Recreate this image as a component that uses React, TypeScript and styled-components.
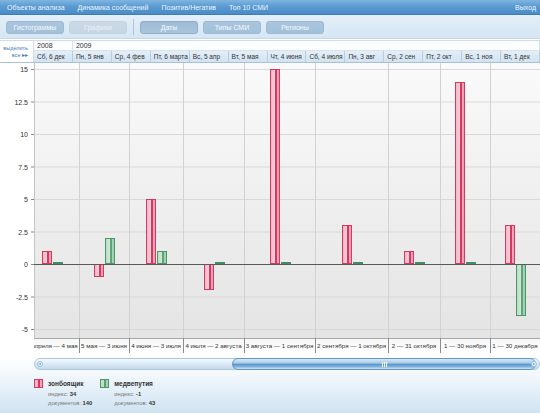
import React from 'react';
import styled, { createGlobalStyle } from 'styled-components';

const GlobalStyle = createGlobalStyle`
  html, body {
    margin: 0;
    padding: 0;
    background: #fff;
  }
  body {
    font-family: "Liberation Sans", Arial, sans-serif;
  }
`;

const Page = styled.div`
  width: 540px;
  height: 413px;
  display: flex;
  flex-direction: column;
  overflow: hidden;
  background: #fff;
`;

const NavBar = styled.div`
  height: 15px;
  display: flex;
  align-items: center;
  gap: 13px;
  padding: 0 4px 0 7px;
  background: linear-gradient(#80b5e0, #5a9bd2 45%, #4a8cc7);
  border-bottom: 1px solid #3f7db6;
  box-sizing: border-box;
`;

const NavLink = styled.span<{ $right?: boolean }>`
  color: #eef5fc;
  font-size: 7px;
  white-space: nowrap;
  margin-left: ${({ $right }) => ($right ? 'auto' : '0')};
`;

const Toolbar = styled.div`
  height: 24px;
  display: flex;
  align-items: center;
  gap: 5px;
  padding: 1px 6px 0;
  background: linear-gradient(#e4eff8, #d6e6f3);
  border-bottom: 1px solid #c4d7e8;
  box-sizing: border-box;
`;

const ToolButton = styled.div<{ $state: 'normal' | 'disabled' | 'active' }>`
  width: 58px;
  height: 13px;
  border-radius: 3px;
  display: flex;
  align-items: center;
  justify-content: center;
  font-size: 7px;
  box-sizing: border-box;
  color: ${({ $state }) => ($state === 'disabled' ? '#e9f1f8' : '#f6fafd')};
  border: 1px solid
    ${({ $state }) =>
      $state === 'active' ? '#8eaecb' : $state === 'disabled' ? '#c3d3e1' : '#9db9d3'};
  background: ${({ $state }) =>
    $state === 'active'
      ? 'linear-gradient(#9fbcd6, #a9c4dc)'
      : $state === 'disabled'
      ? 'linear-gradient(#cbd9e6, #c6d6e4)'
      : 'linear-gradient(#aac5dd, #a3c0da)'};
`;

const Separator = styled.div`
  width: 1px;
  height: 16px;
  background: #aec5da;
  margin: 0 1px;
`;

const DateHeader = styled.div`
  margin-top: 1px;
  display: grid;
  grid-template-columns: 34px repeat(13, 1fr);
  grid-template-rows: 10px 11px;
  border-top: 1px solid #cfdde9;
  border-bottom: 1px solid #a9c1d6;
`;

const SelectAll = styled.div`
  grid-row: 1 / span 2;
  display: flex;
  flex-direction: column;
  align-items: flex-end;
  justify-content: center;
  padding-right: 5px;
  font-size: 5.5px;
  line-height: 7px;
  color: #3f78bd;
  background: #fff;
  border-right: 1px solid #cfdde9;
`;

const YearCell = styled.div<{ $span: number }>`
  grid-column: span ${({ $span }) => $span};
  font-size: 7px;
  color: #333;
  padding-left: 3px;
  display: flex;
  align-items: center;
  background: #fbfdfe;
  border-right: 1px solid #d7e3ee;
  border-bottom: 1px solid #d7e3ee;
`;

const DayCell = styled.div`
  font-size: 6.5px;
  color: #333;
  padding-left: 3px;
  display: flex;
  align-items: center;
  white-space: nowrap;
  overflow: hidden;
  background: linear-gradient(#e3eef8, #d3e3f1);
  border-right: 1px solid #b8cde0;
`;

const ChartBox = styled.div`
  height: 290px;
  background: #fff;
`;

const Footer = styled.div`
  flex: 1;
  display: flex;
  flex-direction: column;
  background: linear-gradient(#fff 10%, #f3f8fc 35%, #d0e3f2);
`;

const ScrollRow = styled.div`
  height: 20px;
  padding: 5px 0 0 34px;
  box-sizing: border-box;
`;

const Track = styled.div`
  position: relative;
  height: 12px;
  border-radius: 6px;
  border: 1px solid #a9c8e2;
  box-sizing: border-box;
  background: linear-gradient(#f4f9fd, #d9e8f4 55%, #c3d9ec);
`;

const Arrow = styled.span<{ $side: 'left' | 'right' }>`
  position: absolute;
  top: 2px;
  ${({ $side }) => ($side === 'left' ? 'left: 2px;' : 'right: 2px;')}
  width: 6px;
  height: 6px;
  border-radius: 3px;
  background: #eef5fb;
  border: 1px solid #98bddc;
  box-sizing: border-box;
  &::after {
    content: '';
    position: absolute;
    top: 1px;
    ${({ $side }) =>
      $side === 'left'
        ? 'left: 0px; border-right: 3px solid #7aa6cc;'
        : 'right: 0px; border-left: 3px solid #7aa6cc;'}
    border-top: 1.5px solid transparent;
    border-bottom: 1.5px solid transparent;
  }
`;

const Thumb = styled.div<{ $start: number; $size: number }>`
  position: absolute;
  top: -1px;
  bottom: -1px;
  left: ${({ $start }) => $start}%;
  width: ${({ $size }) => $size}%;
  border-radius: 6px;
  border: 1px solid #5f98c8;
  box-sizing: border-box;
  background: linear-gradient(#d9eaf6, #a9cbe7 40%, #5b98cc 55%, #7fb1db 75%, #cfe3f3);
  display: flex;
  align-items: center;
  justify-content: center;
  gap: 1px;
`;

const Grip = styled.span`
  width: 1px;
  height: 5px;
  background: #f2f8fd;
`;

const Legend = styled.div`
  display: flex;
  gap: 8px;
  padding: 6px 0 0 34px;
`;

const LegendItem = styled.div`
  display: grid;
  grid-template-columns: 10px auto;
  column-gap: 4px;
  row-gap: 3px;
  align-items: center;
`;

const Swatch = styled.span<{ $tone: 'red' | 'green' }>`
  width: 9px;
  height: 9px;
  box-sizing: border-box;
  border: 1px solid ${({ $tone }) => ($tone === 'red' ? '#d23a62' : '#4d9668')};
  background: ${({ $tone }) =>
    $tone === 'red'
      ? 'linear-gradient(90deg, #f3b8c6 0 40%, #d9375f 40% 70%, #f0a6b8 70%)'
      : 'linear-gradient(90deg, #bfe0cb 0 40%, #5aa273 40% 70%, #a8d3b6 70%)'};
`;

const SeriesName = styled.span`
  font-size: 6.5px;
  font-weight: bold;
  color: #333;
`;

const Stat = styled.span`
  grid-column: 2;
  font-size: 5.8px;
  color: #777;
  b {
    color: #333;
  }
`;

type Category = { label: string; start: number; end: number; red: number; green: number };

const categories: Category[] = [
  { label: '4 апреля — 4 мая', start: 25, end: 79, red: 1, green: 0.15 },
  { label: '5 мая — 3 июня', start: 79, end: 129, red: -1, green: 2 },
  { label: '4 июня — 3 июля', start: 129, end: 183, red: 5, green: 1 },
  { label: '4 июля — 2 августа', start: 183, end: 244, red: -2, green: 0.15 },
  { label: '3 августа — 1 сентября', start: 244, end: 315, red: 15, green: 0.15 },
  { label: '2 сентября — 1 октября', start: 315, end: 388, red: 3, green: 0.15 },
  { label: '2 — 31 октября', start: 388, end: 440, red: 1, green: 0.15 },
  { label: '1 — 30 ноября', start: 440, end: 490, red: 14, green: 0.15 },
  { label: '1 — 30 декабря', start: 490, end: 540, red: 3, green: -4 },
];

const ticks = [15, 12.5, 10, 7.5, 5, 2.5, 0, -2.5, -5];
const days = [
  'Сб, 6 дек', 'Пн, 5 янв', 'Ср, 4 фев', 'Пт, 6 марта', 'Вс, 5 апр', 'Вт, 5 мая', 'Чт, 4 июня',
  'Сб, 4 июля', 'Пн, 3 авг', 'Ср, 2 сен', 'Пт, 2 окт', 'Вс, 1 ноя', 'Вт, 1 дек',
];

const ZERO = 201;
const UNIT = 13;
const PLOT_LEFT = 34;
const PLOT_BOTTOM = 275;
const FONT = '"Liberation Sans", Arial, sans-serif';

function Bar({ x, value, tone }: { x: number; value: number; tone: 'red' | 'green' }) {
  const h = Math.abs(value) * UNIT;
  const y = value >= 0 ? ZERO - h : ZERO;
  if (h < 3) {
    return <rect x={x} y={ZERO - 2} width={10} height={2} fill="#3f8f60" />;
  }
  return (
    <rect
      x={x + 0.5}
      y={y + 0.5}
      width={9}
      height={h - 1}
      fill={`url(#${tone}Fill)`}
      stroke={tone === 'red' ? '#d23a62' : '#4d9668'}
      strokeWidth={1}
    />
  );
}

function Chart() {
  return (
    <svg width={540} height={290} style={{ display: 'block' }}>
      <defs>
        <linearGradient id="plotBg" x1="0" y1="0" x2="0" y2="1">
          <stop offset="0" stopColor="#fafafa" />
          <stop offset="1" stopColor="#e4e4e4" />
        </linearGradient>
        <linearGradient id="redFill" x1="0" y1="0" x2="1" y2="0">
          <stop offset="0" stopColor="#f1b3c3" />
          <stop offset="0.45" stopColor="#f7cdd7" />
          <stop offset="0.46" stopColor="#d9375f" />
          <stop offset="0.72" stopColor="#d9375f" />
          <stop offset="0.73" stopColor="#f1a9bb" />
          <stop offset="1" stopColor="#eb98ad" />
        </linearGradient>
        <linearGradient id="greenFill" x1="0" y1="0" x2="1" y2="0">
          <stop offset="0" stopColor="#b6dbc2" />
          <stop offset="0.45" stopColor="#cfe8d7" />
          <stop offset="0.46" stopColor="#5da575" />
          <stop offset="0.72" stopColor="#5da575" />
          <stop offset="0.73" stopColor="#a9d4b7" />
          <stop offset="1" stopColor="#9ccbac" />
        </linearGradient>
        <linearGradient id="axisBg" x1="0" y1="0" x2="0" y2="1">
          <stop offset="0" stopColor="#f6f6f6" />
          <stop offset="1" stopColor="#ffffff" />
        </linearGradient>
        <clipPath id="plotClip">
          <rect x={PLOT_LEFT} y={0} width={540 - PLOT_LEFT} height={290} />
        </clipPath>
      </defs>

      <rect x={PLOT_LEFT} y={0} width={540 - PLOT_LEFT} height={PLOT_BOTTOM} fill="url(#plotBg)" />

      {ticks.map((t) => {
        const y = ZERO - t * UNIT + 0.5;
        return (
          <g key={t}>
            <line x1={PLOT_LEFT} x2={540} y1={y} y2={y} stroke="#d9d9d9" />
            <line x1={PLOT_LEFT - 3} x2={PLOT_LEFT} y1={y} y2={y} stroke="#888" />
            <text
              x={PLOT_LEFT - 6}
              y={y + 2.5}
              fontSize={7}
              fill="#333"
              textAnchor="end"
              fontFamily={FONT}
            >
              {t}
            </text>
          </g>
        );
      })}

      {categories.slice(1).map((c) => (
        <line key={c.label} x1={c.start + 0.5} x2={c.start + 0.5} y1={0} y2={PLOT_BOTTOM} stroke="#d2d2d2" />
      ))}

      <line x1={PLOT_LEFT + 0.5} x2={PLOT_LEFT + 0.5} y1={0} y2={PLOT_BOTTOM} stroke="#c4c4c4" />

      <g clipPath="url(#plotClip)">
        {categories.map((c) => {
          const mid = Math.round((c.start + c.end) / 2);
          return (
            <g key={c.label}>
              <Bar x={mid - 10} value={c.red} tone="red" />
              <Bar x={mid + 1} value={c.green} tone="green" />
            </g>
          );
        })}
      </g>

      <line x1={PLOT_LEFT} x2={540} y1={ZERO + 0.5} y2={ZERO + 0.5} stroke="#5a5a5a" />

      <rect x={PLOT_LEFT} y={PLOT_BOTTOM} width={540 - PLOT_LEFT} height={15} fill="url(#axisBg)" />
      <line x1={PLOT_LEFT} x2={540} y1={PLOT_BOTTOM + 0.5} y2={PLOT_BOTTOM + 0.5} stroke="#a8a8a8" />
      <g clipPath="url(#plotClip)">
        {categories.map((c, i) => (
          <g key={c.label}>
            {i > 0 && (
              <line x1={c.start + 0.5} x2={c.start + 0.5} y1={PLOT_BOTTOM} y2={PLOT_BOTTOM + 15} stroke="#8c8c8c" />
            )}
            <text
              x={(c.start + c.end) / 2}
              y={PLOT_BOTTOM + 10}
              fontSize={6.2}
              fill="#333"
              textAnchor="middle"
              fontFamily={FONT}
            >
              {c.label}
            </text>
          </g>
        ))}
      </g>
    </svg>
  );
}

export default function App() {
  return (
    <Page>
      <GlobalStyle />
      <NavBar>
        <NavLink>Объекты анализа</NavLink>
        <NavLink>Динамика сообщений</NavLink>
        <NavLink>Позитив/Негатив</NavLink>
        <NavLink>Топ 10 СМИ</NavLink>
        <NavLink $right>Выход</NavLink>
      </NavBar>

      <Toolbar>
        <ToolButton $state="normal">Гистограммы</ToolButton>
        <ToolButton $state="disabled">Графики</ToolButton>
        <Separator />
        <ToolButton $state="active">Даты</ToolButton>
        <ToolButton $state="normal">Типы СМИ</ToolButton>
        <ToolButton $state="normal">Регионы</ToolButton>
      </Toolbar>

      <DateHeader>
        <SelectAll>
          <span>выделить</span>
          <span>все ▸▸</span>
        </SelectAll>
        <YearCell $span={1}>2008</YearCell>
        <YearCell $span={12}>2009</YearCell>
        {days.map((d) => (
          <DayCell key={d}>{d}</DayCell>
        ))}
      </DateHeader>

      <ChartBox>
        <Chart />
      </ChartBox>

      <Footer>
        <ScrollRow>
          <Track>
            <Arrow $side="left" />
            <Thumb $start={39} $size={60.5}>
              <Grip />
              <Grip />
              <Grip />
            </Thumb>
            <Arrow $side="right" />
          </Track>
        </ScrollRow>

        <Legend>
          <LegendItem>
            <Swatch $tone="red" />
            <SeriesName>зонбоящик</SeriesName>
            <Stat>
              индекс: <b>34</b>
            </Stat>
            <Stat>
              документов: <b>140</b>
            </Stat>
          </LegendItem>
          <LegendItem>
            <Swatch $tone="green" />
            <SeriesName>медвепутия</SeriesName>
            <Stat>
              индекс: <b>-1</b>
            </Stat>
            <Stat>
              документов: <b>43</b>
            </Stat>
          </LegendItem>
        </Legend>
      </Footer>
    </Page>
  );
}
